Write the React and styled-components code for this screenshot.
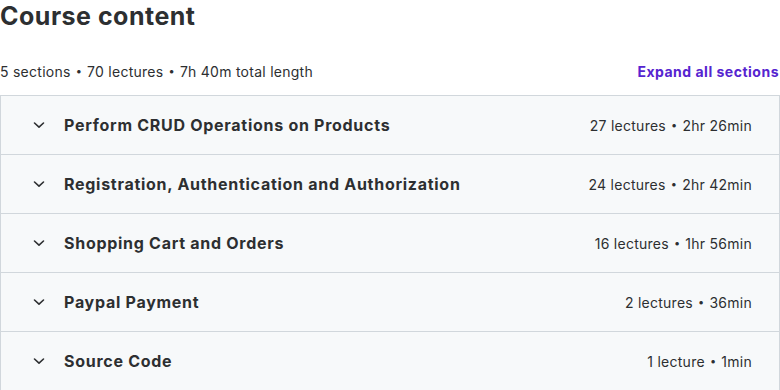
import React from "react"
import styled, { createGlobalStyle } from "styled-components"

const GlobalStyle = createGlobalStyle`
  html, body {
    margin: 0;
    padding: 0;
    background: #ffffff;
  }
  body {
    font-family: Inter, "Noto Sans", sans-serif;
    color: #2d2f31;
  }
`

const sections = [
  { title: "Perform CRUD Operations on Products", meta: ["27 lectures", "2hr 26min"] },
  { title: "Registration, Authentication and Authorization", meta: ["24 lectures", "2hr 42min"] },
  { title: "Shopping Cart and Orders", meta: ["16 lectures", "1hr 56min"] },
  { title: "Paypal Payment", meta: ["2 lectures", "36min"] },
  { title: "Source Code", meta: ["1 lecture", "1min"] },
]

const summary = ["5 sections", "70 lectures", "7h 40m total length"]

const Chevron = () => (
  <svg width="12" height="8" viewBox="0 0 12 8" fill="none">
    <path d="M1.5 2 6 6.2 10.5 2" stroke="#2d2f31" strokeWidth="1.6" strokeLinecap="round" strokeLinejoin="round" />
  </svg>
)

// joins parts with the small udemy-style bullet
const Dotted = ({ parts }) =>
  parts.map((p, i) => (
    <React.Fragment key={i}>
      {i > 0 && <Dot>•</Dot>}
      {p}
    </React.Fragment>
  ))

const App = () => {
  return (
    <>
      <GlobalStyle />
      <Wrapper>
        <Heading>Course content</Heading>
        <MetaBar>
          <Summary>
            <Dotted parts={summary} />
          </Summary>
          <ExpandButton>Expand all sections</ExpandButton>
        </MetaBar>
        <List>
          {sections.map((item, index) => (
            <Row key={index}>
              <IconBox>
                <Chevron />
              </IconBox>
              <RowTitle>{item.title}</RowTitle>
              <RowMeta>
                <Dotted parts={item.meta} />
              </RowMeta>
            </Row>
          ))}
        </List>
      </Wrapper>
    </>
  )
}

export default App

const Wrapper = styled.section`
  width: 780px;
`
const Heading = styled.h2`
  margin: 0;
  font-size: 25px;
  font-weight: 700;
  line-height: 32px;
  letter-spacing: 0.5px;
  color: #2d2f31;
`
const MetaBar = styled.div`
  display: flex;
  justify-content: space-between;
  align-items: center;
  height: 30px;
  margin-top: 24px;
  margin-bottom: 9px;
`
const Summary = styled.span`
  font-size: 14px;
  letter-spacing: 0.26px;
  color: #2d2f31;
`
const Dot = styled.span`
  display: inline-block;
  margin: 0 5px;
  font-size: 11px;
  vertical-align: 2px;
`
const ExpandButton = styled.button`
  border: none;
  background: none;
  padding: 0 1px 0 0;
  font-family: inherit;
  font-size: 14px;
  font-weight: 700;
  letter-spacing: 0.5px;
  color: #5624d0;
  cursor: pointer;
`
const List = styled.ul`
  margin: 0;
  padding: 0;
  list-style: none;
  border: 1px solid #d1d7dc;
  border-bottom: none;
  width: 778px;
`
const Row = styled.li`
  display: flex;
  align-items: center;
  height: 58px;
  padding: 0 27px 0 32px;
  background: #f7f9fa;
  border-bottom: 1px solid #d1d7dc;
`
const IconBox = styled.span`
  display: flex;
  width: 31px;
`
const RowTitle = styled.span`
  flex: 1;
  font-size: 16px;
  font-weight: 700;
  letter-spacing: 0.72px;
  color: #2d2f31;
`
const RowMeta = styled.span`
  font-size: 14px;
  letter-spacing: 0.26px;
  color: #2d2f31;
`
